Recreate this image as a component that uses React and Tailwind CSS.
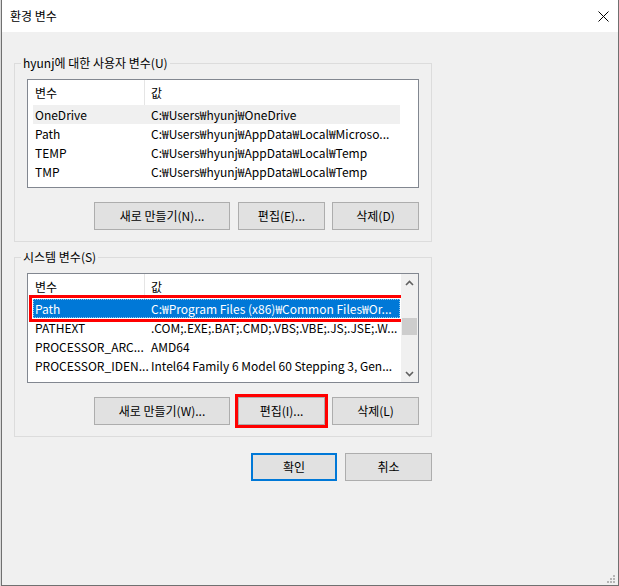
import { useState } from "react";

const userVars = [
  ["OneDrive", "C:₩Users₩hyunj₩OneDrive"],
  ["Path", "C:₩Users₩hyunj₩AppData₩Local₩Microso..."],
  ["TEMP", "C:₩Users₩hyunj₩AppData₩Local₩Temp"],
  ["TMP", "C:₩Users₩hyunj₩AppData₩Local₩Temp"],
];

const systemVars = [
  ["Path", "C:₩Program Files (x86)₩Common Files₩Or..."],
  ["PATHEXT", ".COM;.EXE;.BAT;.CMD;.VBS;.VBE;.JS;.JSE;.W..."],
  ["PROCESSOR_ARC...", "AMD64"],
  ["PROCESSOR_IDEN...", "Intel64 Family 6 Model 60 Stepping 3, Gen..."],
];

function Chevron({ up }) {
  return (
    <svg width="9" height="6" viewBox="0 0 9 6">
      <polyline
        points={up ? "1,5 4.5,1.5 8,5" : "1,1 4.5,4.5 8,1"}
        fill="none"
        stroke="#606060"
        strokeWidth="1.6"
      />
    </svg>
  );
}

function VarList({ rows, selected, focused, height, scroll, marked }) {
  return (
    <div
      className={`flex border border-[#828790] bg-white ${height}`}
    >
      <div className="flex-1 flex flex-col min-w-0">
        <div className="h-[25px] flex items-center shrink-0">
          <div className="w-[117px] shrink-0 h-full flex items-center pl-[7px] border-r border-[#e5e5e5]">
            변수
          </div>
          <div className="pl-[6px]">값</div>
        </div>

        {rows.map(([name, value], i) => {
          const isSel = i === selected;
          let rowCls = "";
          if (isSel && focused) {
            rowCls =
              "bg-[#0078d7] text-white border border-dotted border-[#8cc3ef]";
          } else if (isSel) {
            rowCls = "bg-[#f0f0f0] border border-transparent";
          } else {
            rowCls = "border border-transparent";
          }
          const mark =
            isSel && marked
              ? "outline-[3px] outline-solid outline-[#ff0000] outline-offset-[1px]"
              : "";

          return (
            <div
              key={name}
              className={`h-[19px] ml-[5px] w-[367px] shrink-0 flex items-center ${rowCls} ${mark}`}
            >
              <div className="w-[115px] shrink-0 pl-[1px] whitespace-nowrap overflow-hidden">
                {name}
              </div>
              <div className="pl-[2px] whitespace-nowrap">
                {value}
              </div>
            </div>
          );
        })}
      </div>

      {scroll && (
        <div className="w-[17px] shrink-0 bg-[#f0f0f0] flex flex-col">
          <div className="h-[17px] flex items-center justify-center">
            <Chevron up />
          </div>
          <div className="flex-1">
            <div className="mt-[27px] mx-[1px] h-[17px] bg-[#cdcdcd]" />
          </div>
          <div className="h-[17px] flex items-center justify-center">
            <Chevron />
          </div>
        </div>
      )}
    </div>
  );
}

function Btn({ children, w, className = "" }) {
  return (
    <button
      type="button"
      className={`h-[28px] ${w} bg-[#e1e1e1] border border-[#adadad] flex items-center justify-center ${className}`}
    >
      {children}
    </button>
  );
}

export default function App() {
  const [userSel] = useState(0);
  const [sysSel] = useState(0);

  return (
    <div className="w-[619px] h-[586px] bg-[#d9d9d9] flex font-['Noto_Sans_CJK_KR',sans-serif] text-[12px] text-black">
      <div className="ml-[1px] w-[618px] h-[586px] flex flex-col border-x border-b border-[#707070] bg-[#f0f0f0] relative">
        {/* title bar */}
        <div className="h-[32px] bg-white flex items-center justify-between shrink-0">
          <span className="pl-[8px]">환경 변수</span>
          <svg width="11" height="11" viewBox="0 0 11 11" className="mr-[9px]">
            <path d="M0.5 0.5 L10.5 10.5 M10.5 0.5 L0.5 10.5" stroke="#000" strokeWidth="1" />
          </svg>
        </div>

        <fieldset className="ml-[12px] mt-[23px] w-[418px] border border-[#dcdcdc] pt-[8px] px-[12px] pb-[11px]">
          <legend className="ml-[-6px] px-[2px] leading-[16px]">
            hyunj에 대한 사용자 변수(U)
          </legend>
          <VarList
            rows={userVars}
            selected={userSel}
            focused={false}
            height="h-[109px]"
          />
          <div className="mt-[14px] flex justify-end">
            <Btn w="w-[136px]">새로 만들기(N)...</Btn>
            <Btn w="w-[87px]" className="ml-[8px]">편집(E)...</Btn>
            <Btn w="w-[87px]" className="ml-[7px]">삭제(D)</Btn>
          </div>
        </fieldset>

        <fieldset className="ml-[12px] mt-[7px] w-[418px] border border-[#dcdcdc] pt-[8px] px-[12px] pb-[11px]">
          <legend className="ml-[-6px] px-[2px] leading-[16px]">
            시스템 변수(S)
          </legend>
          <VarList
            rows={systemVars}
            selected={sysSel}
            focused
            marked
            scroll
            height="h-[110px]"
          />
          <div className="mt-[14px] flex justify-end">
            <Btn w="w-[136px]">새로 만들기(W)...</Btn>
            <Btn
              w="w-[87px]"
              className="ml-[8px] outline-[3px] outline-solid outline-[#ff0000]"
            >
              편집(I)...
            </Btn>
            <Btn w="w-[87px]" className="ml-[7px]">삭제(L)</Btn>
          </div>
        </fieldset>

        <div className="ml-[12px] mt-[16px] w-[418px] flex justify-end gap-[8px]">
          <button
            type="button"
            className="h-[28px] w-[86px] bg-[#e1e1e1] border-2 border-[#0078d7] flex items-center justify-center"
          >
            확인
          </button>
          <Btn w="w-[87px]">취소</Btn>
        </div>

        {/* resize grip */}
        <div className="absolute right-[3px] bottom-[2px] grid grid-cols-3 gap-[1px]">
          <span className="w-[2px] h-[2px]" />
          <span className="w-[2px] h-[2px]" />
          <span className="w-[2px] h-[2px] bg-[#b5b5b5]" />
          <span className="w-[2px] h-[2px]" />
          <span className="w-[2px] h-[2px] bg-[#b5b5b5]" />
          <span className="w-[2px] h-[2px] bg-[#b5b5b5]" />
          <span className="w-[2px] h-[2px] bg-[#b5b5b5]" />
          <span className="w-[2px] h-[2px] bg-[#b5b5b5]" />
          <span className="w-[2px] h-[2px] bg-[#b5b5b5]" />
        </div>
      </div>
    </div>
  );
}
